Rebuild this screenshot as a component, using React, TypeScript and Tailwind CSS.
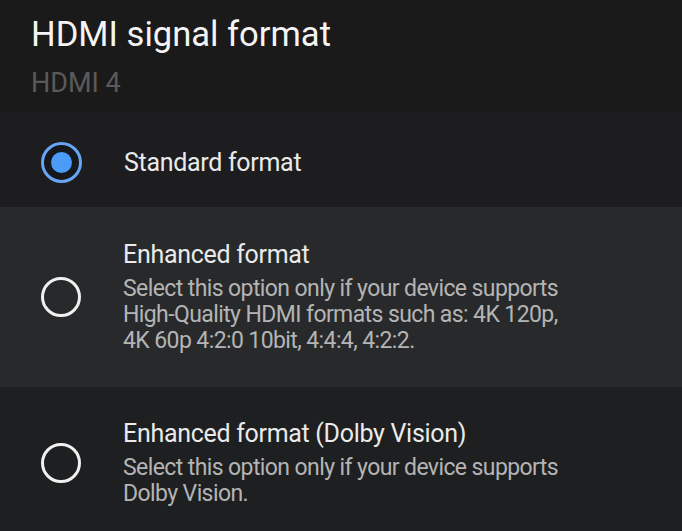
import React from "react";

interface OptionProps {
  title: string;
  lines?: string[];
  selected?: boolean;
  className: string;
}

const Radio: React.FC<{ selected?: boolean }> = ({ selected }) => {
  if (selected) {
    return (
      <div className="w-[41px] h-[41px] rounded-full border-[3px] border-[#68a5f4] bg-[#15181d] flex items-center justify-center shrink-0">
        <div className="w-[21px] h-[21px] rounded-full bg-[#4b9cf8]" />
      </div>
    );
  }
  return <div className="w-[40px] h-[40px] rounded-full border-[3px] border-[#f0f0f0] shrink-0" />;
};

const Option: React.FC<OptionProps> = ({ title, lines, selected, className }) => {
  return (
    <div className={`flex items-center pl-[41px] ${className}`}>
      <Radio selected={selected} />
      <div className="ml-[42px]">
        <div className="text-[25px] leading-[28px] text-[#eaeaea] tracking-[-0.3px]">{title}</div>
        {lines && (
          <div className="mt-[7px] text-[23px] leading-[26px] text-[#b4b4b4] tracking-[-0.6px]">
            {lines.map((l) => (
              <div key={l}>{l}</div>
            ))}
          </div>
        )}
      </div>
    </div>
  );
};

export default function App() {
  return (
    <div
      className="w-[682px] h-[531px] overflow-hidden flex flex-col bg-[#1e1f20]"
      style={{ fontFamily: "Roboto, 'Noto Sans', sans-serif" }}
    >
      <div className="h-[112px] bg-[#1a1a1a] pl-[31px] pt-[14px] shrink-0">
        <div className="text-[34.6px] leading-[40px] text-[#f4f4f4]">HDMI signal format</div>
        <div className="text-[27px] leading-[30px] text-[#5a5a5a] mt-[14px]">HDMI 4</div>
      </div>
      <Option title="Standard format" selected className="h-[95px] pt-[6px] bg-[#1d1d1f] shrink-0" />
      <Option
        title="Enhanced format"
        lines={[
          "Select this option only if your device supports",
          "High-Quality HDMI formats such as: 4K 120p,",
          "4K 60p 4:2:0 10bit, 4:4:4, 4:2:2.",
        ]}
        className="h-[180px] bg-[#28292b] shrink-0"
      />
      <Option
        title="Enhanced format (Dolby Vision)"
        lines={["Select this option only if your device supports", "Dolby Vision."]}
        className="flex-1 pt-[8px] bg-[#1e1f20]"
      />
    </div>
  );
}
